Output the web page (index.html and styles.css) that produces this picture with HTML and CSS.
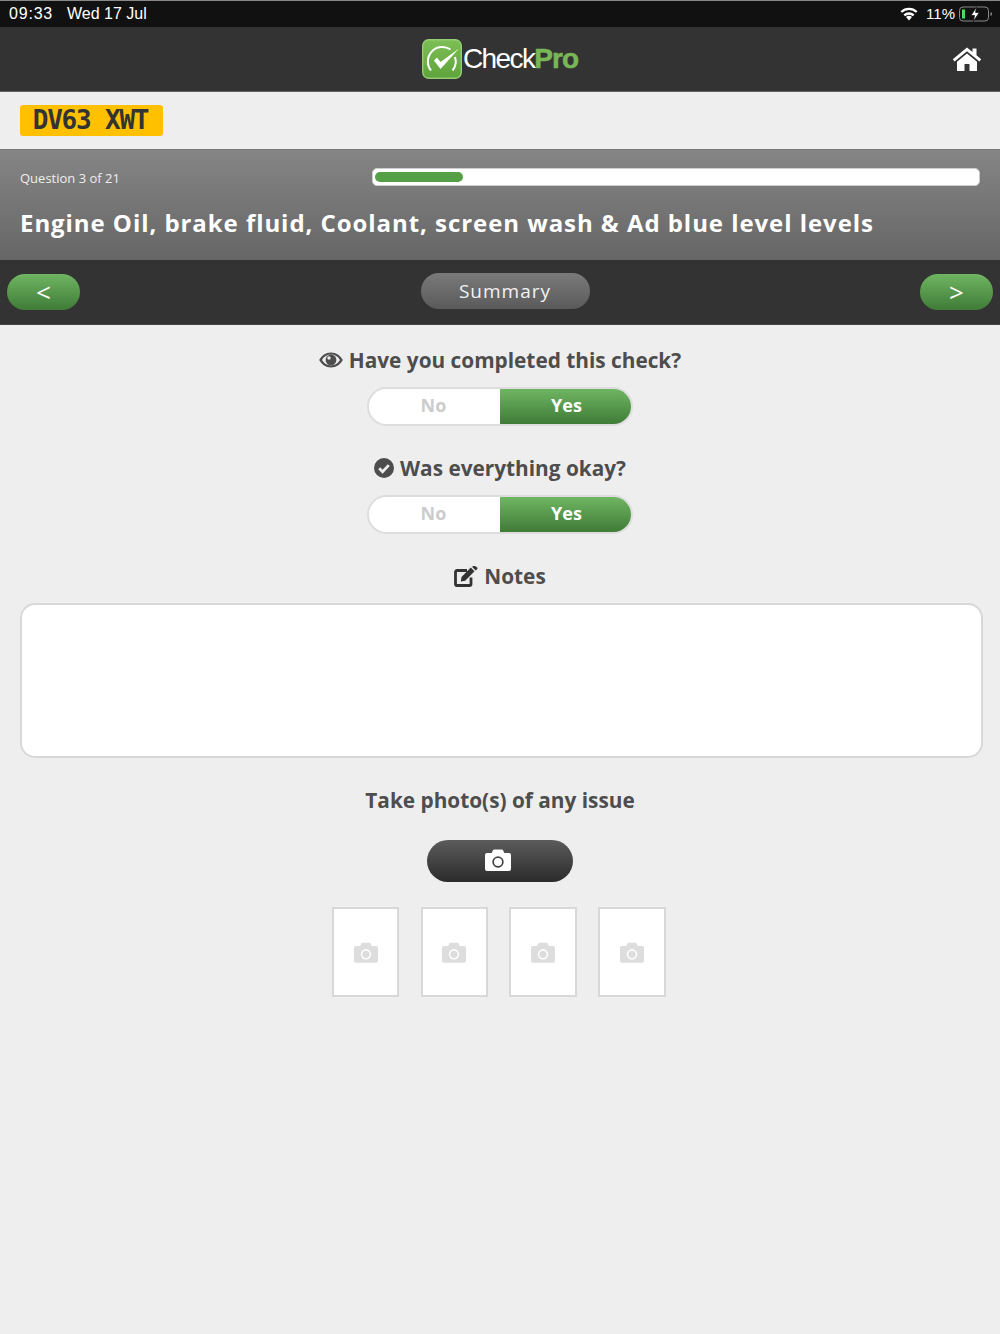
FILE: index.html
```html
<!DOCTYPE html>
<html lang="en">
<head>
    <meta charset="UTF-8">
    <meta name="viewport" content="width=device-width, initial-scale=1.0">
    <title>CheckPro</title>
    <link rel="stylesheet" href="styles.css">
</head>
<body>

<div class="status-bar">
    <span class="status-time">09:33</span>
    <span class="status-date">Wed 17 Jul</span>
    <svg class="status-wifi" viewBox="0 0 20 15" width="20" height="15">
        <path d="M10 14.500l-3-3.400a4.400 4.400 0 0 1 6 0z" fill="#fff"/>
        <path d="M5.300 9.300a7 7 0 0 1 9.400 0" fill="none" stroke="#fff" stroke-width="2.300"/>
        <path d="M2.300 6a11.200 11.200 0 0 1 15.400 0" fill="none" stroke="#fff" stroke-width="2.300"/>
    </svg>
    <span class="status-battery-text">11%</span>
    <svg class="status-battery" viewBox="0 0 34 16" width="34" height="16">
        <rect x="0.500" y="1" width="29" height="14" rx="3.500" fill="none" stroke="#8a8a8a"/>
        <rect x="3" y="3.500" width="3" height="9" fill="#4cd964"/>
        <path d="M31.500 6v4c1-.3 1.500-1 1.500-2s-.5-1.700-1.500-2z" fill="#8a8a8a"/>
        <path d="M17.500 1l-5.500 8.500h3.500l-1.200 6 6-9h-3.700z" fill="#fff" stroke="#111" stroke-width="0.800"/>
    </svg>
</div>

<header class="app-header">
    <div class="logo">
        <svg class="logo-mark" viewBox="0 0 40 40" width="40" height="40">
            <defs>
                <linearGradient id="logoGreen" x1="0" y1="0" x2="0" y2="1">
                    <stop offset="0" stop-color="#7cbf55"/>
                    <stop offset="1" stop-color="#5fa33c"/>
                </linearGradient>
            </defs>
            <rect x="0.700" y="0.700" width="38.600" height="38.600" rx="6" fill="url(#logoGreen)" stroke="#93cc72" stroke-width="1.400"/>
            <path d="M9 31.500A14.500 14.500 0 0 1 28.500 10.500" fill="none" stroke="#fff" stroke-width="2"/>
            <path d="M33 18A14.500 14.500 0 0 1 30.500 31.500" fill="none" stroke="#fff" stroke-width="2"/>
            <path d="M12 21.500l3-3 3.500 4.500L37 9.500 18.500 30z" fill="#fff"/>
        </svg>
        <span class="logo-text">Check<b>Pro</b></span>
    </div>
    <svg class="home-icon" viewBox="0 0 30 26" width="30" height="26">
        <path d="M15 1.500L0.800 13.200l1.800 2.200L15 5.200l12.400 10.200 1.800-2.200-4.700-3.900V2.500h-4v3.500z" fill="#fff"/>
        <path d="M15 7.500L5 15.700V25h7.500v-7h5v7H25v-9.300z" fill="#fff"/>
    </svg>
</header>

<div class="reg-row">
    <span class="reg-plate">DV63 XWT</span>
</div>

<section class="question-head">
    <div class="question-top">
        <span class="question-count">Question 3 of 21</span>
        <div class="progress"><div class="progress-fill" style="width: 88px"></div></div>
    </div>
    <h1 class="question-title">Engine Oil, brake fluid, Coolant, screen wash &amp; Ad blue level levels</h1>
</section>

<nav class="question-nav">
    <button class="nav-btn">&lt;</button>
    <button class="summary-btn">Summary</button>
    <button class="nav-btn">&gt;</button>
</nav>

<main class="content">
    <h2 class="field-label">
        <svg class="eye-icon" viewBox="0 0 24 16" width="24" height="16">
            <path fill-rule="evenodd" fill="#4d4d4d" d="M12 .5C6.800.5 2.500 3.500.200 8c2.300 4.500 6.600 7.500 11.800 7.500S21.500 12.500 23.800 8C21.500 3.500 17.200.5 12 .5zM12 2.600c3.800 0 7.100 2 9 5.400-1.900 3.400-5.200 5.400-9 5.400S4.900 11.400 3 8c1.900-3.400 5.200-5.400 9-5.400z"/>
            <circle cx="12" cy="8" r="5.400" fill="#4d4d4d"/>
            <circle cx="10" cy="6" r="1.700" fill="#eee"/>
        </svg>
        Have you completed this check?
    </h2>
    <div class="toggle">
        <span class="toggle-no">No</span>
        <span class="toggle-yes">Yes</span>
    </div>

    <h2 class="field-label">
        <svg viewBox="0 0 20 20" width="20" height="20">
            <circle cx="10" cy="10" r="10" fill="#4d4d4d"/>
            <path d="M5.200 10.300l3.400 3.400 6.200-6.600" fill="none" stroke="#eee" stroke-width="2.800"/>
        </svg>
        Was everything okay?
    </h2>
    <div class="toggle">
        <span class="toggle-no">No</span>
        <span class="toggle-yes">Yes</span>
    </div>

    <h2 class="field-label">
        <svg viewBox="0 0 24 21" width="24" height="21">
            <path d="M17 11.500V18a1.500 1.500 0 0 1-1.500 1.500H3A1.500 1.500 0 0 1 1.500 18V6A1.500 1.500 0 0 1 3 4.500h10" fill="none" stroke="#333" stroke-width="2.800"/>
            <path d="M7.500 11l-.7 4.400 4.400-.7L20.500 5.300l-3.700-3.700z" fill="#333"/>
            <path d="M18 .7l3.700 3.700 1.500-1.500a1 1 0 0 0 0-1.400L21 .0a1 1 0 0 0-1.400 0z" fill="#333"/>
        </svg>
        Notes
    </h2>
    <textarea class="notes"></textarea>

    <h2 class="field-label photo-label">Take photo(s) of any issue</h2>
    <button class="photo-btn">
        <svg viewBox="0 0 26 22" width="26" height="22"><use href="#camera" fill="#fff"/></svg>
    </button>

    <div class="thumbs">
        <div class="thumb"><svg viewBox="0 0 26 22" width="24" height="21"><use href="#camera" fill="#ddd"/></svg></div>
        <div class="thumb"><svg viewBox="0 0 26 22" width="24" height="21"><use href="#camera" fill="#ddd"/></svg></div>
        <div class="thumb"><svg viewBox="0 0 26 22" width="24" height="21"><use href="#camera" fill="#ddd"/></svg></div>
        <div class="thumb"><svg viewBox="0 0 26 22" width="24" height="21"><use href="#camera" fill="#ddd"/></svg></div>
    </div>
</main>

<svg class="svg-defs" width="0" height="0">
    <defs>
        <path id="camera" fill-rule="evenodd" d="M9.500 0.500h7a2 2 0 0 1 1.800 1.200L19.300 4H24a2 2 0 0 1 2 2v14a2 2 0 0 1-2 2H2a2 2 0 0 1-2-2V6a2 2 0 0 1 2-2h4.700l1-2.300a2 2 0 0 1 1.800-1.200zM13 7.300a5.700 5.700 0 1 0 0 11.400 5.700 5.700 0 0 0 0-11.400zM13 9a4 4 0 1 1 0 8 4 4 0 0 1 0-8z"/>
    </defs>
</svg>

</body>
</html>
```

FILE: styles.css
```css
* {
    box-sizing: border-box;
}
body {
    margin: 0;
    height: 1334px;
    overflow: hidden;
    background: #eeeeee;
    font-family: "Open Sans", sans-serif;
    color: #4d4d4d;
}
button {
    font-family: "Open Sans", sans-serif;
    border: none;
    padding: 0;
}

.status-bar {
    height: 27px;
    background: #111;
    border-top: 1px solid #888;
    display: flex;
    align-items: center;
    padding: 0 7px 1px 9px;
    color: #fff;
    font-family: "Liberation Sans", sans-serif;
    font-size: 16px;
}
.status-time {
    letter-spacing: 0.800px;
}
.status-date {
    margin-left: 14px;
}
.status-wifi {
    margin-left: auto;
}
.status-battery-text {
    margin-left: 7px;
    font-size: 15px;
}
.status-battery {
    margin-left: 4px;
}

.app-header {
    height: 65px;
    background: #333;
    border-bottom: 1px solid #666;
    display: flex;
    align-items: center;
    justify-content: center;
    position: relative;
}
.logo {
    display: flex;
    align-items: center;
}
.logo-text {
    font-family: "Liberation Sans", sans-serif;
    font-size: 28px;
    letter-spacing: -1.600px;
    color: #fff;
    margin-left: 1px;
}
.logo-text b {
    font-weight: 700;
    letter-spacing: -1px;
    color: #78b756;
    -webkit-text-stroke: 0.500px #78b756;
}
.home-icon {
    position: absolute;
    right: 18px;
    top: 19px;
}

.reg-row {
    height: 57px;
    padding: 13px 20px 0;
}
.reg-plate {
    display: block;
    width: 143px;
    height: 31px;
    padding-right: 2px;
    background: #ffc000;
    border-radius: 3px;
    color: #333;
    font-family: "DejaVu Sans Mono", monospace;
    font-weight: bold;
    font-size: 26px;
    letter-spacing: -1.200px;
    line-height: 31px;
    text-align: center;
}

.question-head {
    height: 111px;
    border-top: 1px solid #777;
    background: linear-gradient(#858585, #666);
    padding: 0 20px;
}
.question-top {
    display: flex;
    align-items: center;
    justify-content: space-between;
    padding-top: 18px;
}
.question-count {
    padding-top: 2px;
    font-size: 13px;
    line-height: 16px;
    color: #eee;
}
.progress {
    width: 608px;
    height: 18px;
    background: #fff;
    border: 1px solid #ccc;
    border-radius: 5px;
    padding: 3px 2px;
}
.progress-fill {
    height: 10px;
    background: #55a047;
    border-radius: 5px;
}
.question-title {
    margin: 20px 0 0;
    color: #fff;
    font-size: 24px;
    font-weight: 700;
    line-height: 33px;
    letter-spacing: 0.940px;
}

.question-nav {
    height: 65px;
    background: #333;
    border-bottom: 1px solid #444;
    display: flex;
    align-items: center;
    justify-content: space-between;
    padding: 0 7px;
}
.nav-btn {
    width: 73px;
    height: 36px;
    border-radius: 18px;
    background: linear-gradient(#6fb562, #3f7c37);
    color: #fff;
    font-size: 26px;
    line-height: 34px;
}
.summary-btn {
    width: 169px;
    height: 36px;
    border-radius: 18px;
    margin-bottom: 3px;
    margin-left: 10px;
    background: linear-gradient(#7a7a7a, #5a5a5a);
    color: #f2f2f2;
    font-size: 19px;
    letter-spacing: 1px;
}

.content {
    display: flex;
    flex-direction: column;
    align-items: center;
    padding: 20px 20px 0;
}
.field-label {
    display: flex;
    align-items: center;
    justify-content: center;
    gap: 6px;
    margin: 0;
    height: 30px;
    font-size: 20.800px;
    font-weight: 700;
    color: #4d4d4d;
}
.toggle {
    display: flex;
    width: 266px;
    height: 39px;
    margin: 12px 0 27px;
    border: 2px solid #ddd;
    border-radius: 20px;
    overflow: hidden;
    font-size: 18px;
    font-weight: 700;
    text-align: center;
    line-height: 32px;
}
.toggle-no {
    flex: 1;
    padding-right: 2px;
    background: #fff;
    color: #ccc;
}
.toggle-yes {
    flex: 1;
    padding-left: 2px;
    background: linear-gradient(#6fb562, #3f7c37);
    color: #fff;
}

.notes {
    display: block;
    width: 963px;
    height: 155px;
    margin: 12px 0 0;
    align-self: flex-start;
    border: 2px solid #d8d8d8;
    border-radius: 15px;
    background: #fff;
    resize: none;
}
.photo-label {
    margin-top: 27px;
}
.photo-btn {
    display: flex;
    align-items: center;
    justify-content: center;
    width: 146px;
    height: 42px;
    margin-top: 25px;
    border-radius: 21px;
    background: linear-gradient(#5c5c5c, #2b2b2b);
    padding: 0 5px 2px 0;
}

.thumbs {
    display: flex;
    gap: 21.200px;
    margin: 25px 2.500px 0 0;
}
.thumb {
    display: flex;
    align-items: center;
    justify-content: center;
    width: 67.500px;
    height: 90px;
    background: #fff;
    border: 2px solid #d8d8d8;
}
.svg-defs {
    position: absolute;
}
```
